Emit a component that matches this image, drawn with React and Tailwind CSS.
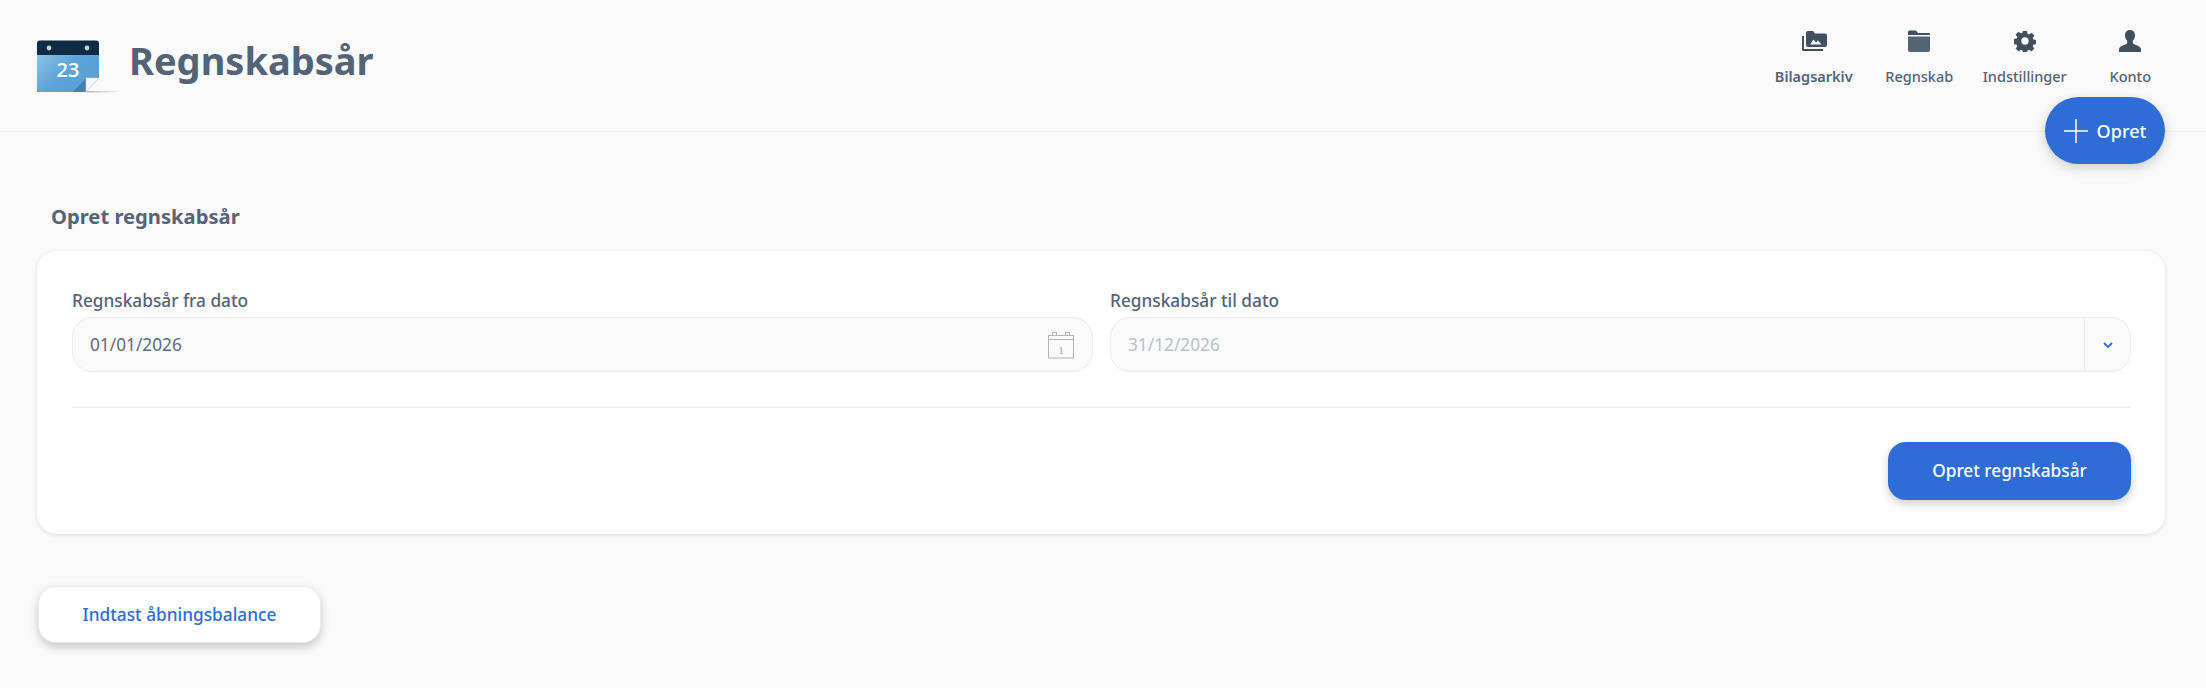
import React from 'react';

const bodyFont = "font-['Noto_Sans','Open_Sans',sans-serif]";

const CalendarLogo = () => (
  <svg width="85" height="54" viewBox="0 0 85 54" className="shrink-0">
    <defs>
      <linearGradient id="sheet" x1="0" y1="0" x2="1" y2="0.6">
        <stop offset="0" stopColor="#8fc1e6" />
        <stop offset="0.55" stopColor="#5ba3d8" />
        <stop offset="1" stopColor="#5a9fd4" />
      </linearGradient>
      <linearGradient id="floor" x1="0" y1="0" x2="1" y2="0">
        <stop offset="0" stopColor="#b5b5b5" />
        <stop offset="1" stopColor="#fafafa" />
      </linearGradient>
    </defs>
    <rect x="49" y="52" width="36" height="1.5" fill="url(#floor)" />
    <path d="M0 15H62V39L49 53H0Z" fill="url(#sheet)" />
    <path d="M36 53L49 39L49 53Z" fill="#4580b5" />
    <path d="M49 39H62L49 53Z" fill="#f7f7f7" stroke="#d4d4d4" strokeWidth="0.6" />
    <path d="M0 4.500a3 3 0 0 1 3-3H59a3 3 0 0 1 3 3V16H0Z" fill="#0e2b43" />
    <circle cx="12" cy="9" r="2.400" fill="#c9d0d6" />
    <circle cx="50" cy="9" r="2.400" fill="#c9d0d6" />
    <text x="31" y="38" textAnchor="middle" fontSize="20" fontWeight="600" fill="#ffffff" fontFamily="'Open Sans', sans-serif">23</text>
  </svg>
);

const PhotosIcon = () => (
  <svg width="26" height="22" viewBox="0 0 26 22">
    <path d="M1 6V19.500A1.500 1.500 0 0 0 2.500 21H22V19H3V6Z" fill="#434f5e" />
    <path d="M5 3a2 2 0 0 1 2-2h5l2 2.500h10a2 2 0 0 1 2 2V15a2 2 0 0 1-2 2H7a2 2 0 0 1-2-2Z" fill="#434f5e" />
    <path d="M9 14.500l3.500-5 2.500 3 2-2 3.500 4Z" fill="#fafafa" />
  </svg>
);

const FolderIcon = () => (
  <svg width="22" height="22" viewBox="0 0 22 22">
    <path d="M0 2a1.500 1.500 0 0 1 1.500-1.500H8L10 3H21a1 1 0 0 1 1 1V5H0Z" fill="#434f5e" />
    <path d="M0 6.500H22V20a2 2 0 0 1-2 2H2a2 2 0 0 1-2-2Z" fill="#556377" />
  </svg>
);

const GearIcon = () => (
  <svg width="22" height="22" viewBox="0 0 24 24">
    <path
      fillRule="evenodd"
      d="M9.800 1h4.400l.6 3.100 1.700.7 2.600-1.800 3.100 3.100-1.800 2.600.7 1.700 3 .6v4.400l-3 .6-.7 1.700 1.800 2.600-3.100 3.100-2.600-1.800-1.700.7-.6 3H9.800l-.6-3-1.700-.7-2.600 1.800-3.100-3.100 1.800-2.600-.7-1.700-3-.6V9.800l3-.6.7-1.700L1.800 4.900 4.900 1.800l2.600 1.800 1.700-.7ZM12 8a4 4 0 1 0 0 8 4 4 0 0 0 0-8Z"
      fill="#434f5e"
    />
  </svg>
);

const PersonIcon = () => (
  <svg width="22" height="22" viewBox="0 0 22 22">
    <path
      d="M11 0c3 0 5 2.200 5 5.300 0 2.300-1 4.300-2.200 5.500v1.700c0 1.200 1.200 1.700 3.200 2.500 2.700 1 5 2 5 4.500V22H0v-2.500c0-2.500 2.300-3.500 5-4.500 2-.8 3.200-1.300 3.200-2.500v-1.700C7 9.600 6 7.600 6 5.300 6 2.200 8 0 11 0Z"
      fill="#434f5e"
    />
  </svg>
);

const DateIcon = () => (
  <svg width="28" height="28" viewBox="0 0 28 28" fill="none" stroke="#b5b5b5" strokeWidth="1">
    <rect x="1.500" y="4.500" width="25" height="22.500" />
    <path d="M1.500 8.500H26.500" />
    <rect x="5.500" y="1.500" width="4" height="3" />
    <rect x="18.500" y="1.500" width="4" height="3" />
    <text x="14" y="23" textAnchor="middle" fontSize="11" fill="#a8a8a8" stroke="none" fontFamily="'Liberation Serif', serif">1</text>
  </svg>
);

const navItems = [
  { label: 'Bilagsarkiv', icon: <PhotosIcon />, active: true },
  { label: 'Regnskab', icon: <FolderIcon /> },
  { label: 'Indstillinger', icon: <GearIcon /> },
  { label: 'Konto', icon: <PersonIcon /> },
];

const App = () => {
  return (
    <div className={`relative min-h-[688px] bg-[#fafafa] text-[#556377] ${bodyFont}`}>
      <header className="flex h-[132px] items-start justify-between border-b border-[#eeeeee] pl-[37px] pr-[23px]">
        <div className="flex items-center gap-[7px] pt-[39px]">
          <CalendarLogo />
          <h1 className="-mt-[12px] text-[38px] leading-[50px] font-bold">Regnskabsår</h1>
        </div>
        <nav className="flex pt-[30px]">
          {navItems.map((item) => (
            <a key={item.label} className="flex w-[105.500px] flex-col items-center">
              <span className="flex h-[22px] items-center justify-center">{item.icon}</span>
              <span className={`mt-[14px] text-[14.500px] leading-[20px] ${item.active ? 'font-semibold' : 'font-medium'}`}>
                {item.label}
              </span>
            </a>
          ))}
        </nav>
      </header>

      <button className="absolute left-[2045px] top-[97px] flex h-[67px] w-[120px] items-center justify-center gap-[9px] rounded-full bg-[#2e6cd6] pt-px text-[18px] font-medium text-white shadow-[0_4px_12px_rgba(0,0,0,0.18)]">
        <svg width="24" height="24" viewBox="0 0 24 24" stroke="#ffffff" strokeWidth="1.500">
          <path d="M12 0V24M0 12H24" />
        </svg>
        Opret
      </button>

      <main className="pl-[37px] pr-[41px] pt-[71px]">
        <h2 className="pl-[14px] text-[20.200px] leading-[26px] font-bold">Opret regnskabsår</h2>

        <section className="mt-[22px] rounded-[20px] bg-white pl-[35px] pr-[34px] pt-[39px] pb-[34px] shadow-[0_1px_4px_rgba(0,0,0,0.12)]">
          <div className="grid grid-cols-2 gap-x-[17px]">
            <div>
              <label className="block text-[17.250px] leading-[22px] font-medium">Regnskabsår fra dato</label>
              <div className="mt-[5px] flex h-[55px] items-center justify-between rounded-[20px] border border-[#ebebeb] bg-[#fafafa] pl-[17px] pr-[17px]">
                <span className="text-[17.250px] text-[#5d6b7e]">01/01/2026</span>
                <DateIcon />
              </div>
            </div>
            <div>
              <label className="block text-[17.250px] leading-[22px] font-medium">Regnskabsår til dato</label>
              <div className="mt-[5px] flex h-[55px] items-center justify-between rounded-[20px] border border-[#ebebeb] bg-[#fafafa] pl-[17px]">
                <span className="text-[17.250px] text-[#b9c1cc]">31/12/2026</span>
                <span className="flex h-full w-[46px] items-center justify-center border-l border-[#ebebeb]">
                  <svg width="10" height="6" viewBox="0 0 10 6" fill="none" stroke="#2e6cd6" strokeWidth="1.800">
                    <path d="M1 1L5 5L9 1" />
                  </svg>
                </span>
              </div>
            </div>
          </div>

          <div className="mt-[35px] border-t border-[#ebebeb]" />

          <div className="mt-[34px] flex justify-end">
            <button className="h-[58px] w-[243px] rounded-[18px] bg-[#2e6cd6] text-[17.250px] font-medium text-white shadow-[0_4px_10px_rgba(0,0,0,0.2)]">
              Opret regnskabsår
            </button>
          </div>
        </section>

        <button className="mt-[52px] ml-px h-[57px] w-[283px] rounded-[18px] border border-[#ebebeb] bg-white text-[17.250px] font-medium text-[#2e6cd6] shadow-[0_4px_10px_rgba(0,0,0,0.2)]">
          Indtast åbningsbalance
        </button>
      </main>
    </div>
  );
};

export default App;
